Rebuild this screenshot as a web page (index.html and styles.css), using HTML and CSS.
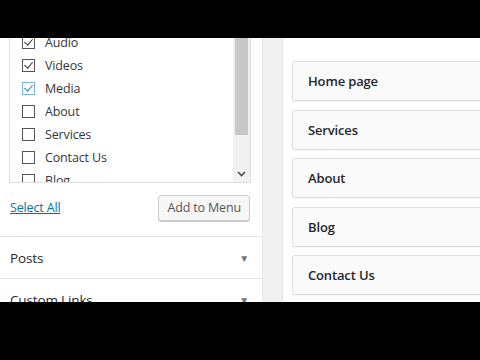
FILE: index.html
```html
<!DOCTYPE html>
<html lang="en">
<head>
    <meta charset="UTF-8">
    <meta name="viewport" content="width=device-width, initial-scale=1.0">
    <title>Menus</title>
    <link rel="stylesheet" href="styles.css">
</head>
<body>
    <div class="screen">
        <div class="sidebar">
            <div class="checklist">
                <ul class="items">
                    <li><span class="box checked"></span>Audio</li>
                    <li><span class="box checked"></span>Videos</li>
                    <li><span class="box checked focus"></span>Media</li>
                    <li><span class="box"></span>About</li>
                    <li><span class="box"></span>Services</li>
                    <li><span class="box"></span>Contact Us</li>
                    <li><span class="box"></span>Blog</li>
                </ul>
                <div class="scrollbar">
                    <div class="thumb"></div>
                    <div class="arrow">
                        <svg width="9" height="6" viewBox="0 0 9 6"><path d="M1 1l3.5 3.5L8 1" fill="none" stroke="#505050" stroke-width="1.6"/></svg>
                    </div>
                </div>
            </div>
            <div class="actions">
                <a href="#" class="select-all">Select All</a>
                <button class="add-button">Add to Menu</button>
            </div>
            <div class="section">
                <span>Posts</span>
                <span class="toggle">&#9660;</span>
            </div>
            <div class="section">
                <span>Custom Links</span>
                <span class="toggle">&#9660;</span>
            </div>
        </div>
        <div class="divider"></div>
        <div class="main">
            <div class="menu-item">Home page</div>
            <div class="menu-item">Services</div>
            <div class="menu-item">About</div>
            <div class="menu-item">Blog</div>
            <div class="menu-item">Contact Us</div>
        </div>
    </div>
</body>
</html>
```

FILE: styles.css
```css
body {
    margin: 0;
    background: #000;
    font-family: "Open Sans", "Noto Sans", sans-serif;
    font-size: 12.5px;
    letter-spacing: -0.15px;
    color: #32373c;
}

.screen {
    margin-top: 38px;
    height: 264px;
    overflow: hidden;
    display: flex;
    background: #fff;
}

.sidebar {
    width: 262px;
    flex-shrink: 0;
    border-right: 1px solid #e5e5e5;
}

.checklist {
    margin: -14px 0 0 9px;
    width: 240px;
    height: 158px;
    border: 1px solid #ddd;
    border-top: none;
    display: flex;
    overflow: hidden;
}

.items {
    flex: 1;
    list-style: none;
    margin: 0;
    padding: 7px 0 0 12px;
}

.items li {
    height: 23px;
    display: flex;
    align-items: center;
    gap: 10px;
}

.box {
    width: 11px;
    height: 11px;
    border: 1px solid #555;
    position: relative;
}

.box.checked::after {
    content: "";
    position: absolute;
    left: 3px;
    top: 0;
    width: 4px;
    height: 7px;
    border: solid #333;
    border-width: 0 1.5px 1.5px 0;
    transform: rotate(40deg);
}

.box.focus {
    border-color: #7eb4dc;
}

.box.focus::after {
    border-color: #1e8cbe;
}

.scrollbar {
    width: 17px;
    background: #f1f1f1;
    display: flex;
    flex-direction: column;
}

.thumb {
    height: 111px;
    margin: 0 2px;
    background: #c8c8c8;
}

.arrow {
    margin-top: auto;
    height: 16px;
    display: flex;
    align-items: center;
    justify-content: center;
}

.actions {
    display: flex;
    justify-content: space-between;
    align-items: center;
    padding: 0 12px 4px 10px;
    height: 54px;
    box-sizing: border-box;
    border-bottom: 1px solid #e5e5e5;
}

.select-all {
    color: #0073aa;
    text-decoration: underline;
}

.add-button {
    height: 26px;
    padding: 0 8px;
    font-family: inherit;
    font-size: 12.5px;
    letter-spacing: -0.15px;
    color: #555;
    background: #f7f7f7;
    border: 1px solid #ccc;
    border-radius: 3px;
    box-shadow: 0 1px 0 #ccc;
}

.section {
    height: 41px;
    display: flex;
    justify-content: space-between;
    align-items: center;
    padding: 0 13px 0 10px;
    border-bottom: 1px solid #e5e5e5;
    font-size: 13.5px;
    color: #23282d;
}

.toggle {
    font-size: 10px;
    color: #72777c;
}

.divider {
    width: 19px;
    flex-shrink: 0;
    background: #f1f1f1;
    border-right: 1px solid #e5e5e5;
}

.main {
    flex: 1;
    padding: 23px 0 0 9px;
    display: flex;
    flex-direction: column;
    gap: 8.5px;
}

.menu-item {
    height: 38px;
    flex-shrink: 0;
    display: flex;
    align-items: center;
    padding-left: 15px;
    margin-right: -10px;
    background: #fafafa;
    border: 1px solid #dfdfdf;
    border-radius: 2px;
    box-shadow: 0 1px 1px rgba(0, 0, 0, 0.04);
    font-size: 13px;
    font-weight: 600;
    color: #23282d;
}
```
